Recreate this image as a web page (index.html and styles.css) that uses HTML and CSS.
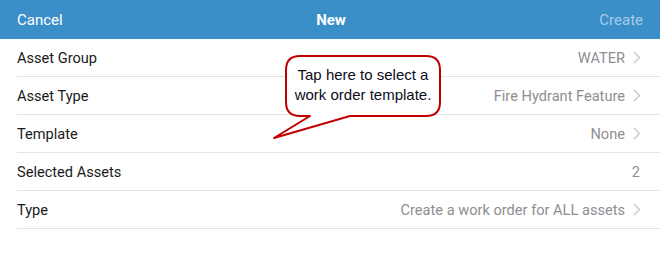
FILE: index.html
```html
<!DOCTYPE html>
<html lang="en">
<head>
    <meta charset="UTF-8">
    <title>New Work Order</title>
    <link rel="stylesheet" href="styles.css">
</head>
<body>
    <div class="nav">
        <span class="nav-left">Cancel</span>
        <span class="nav-title">New</span>
        <span class="nav-right">Create</span>
    </div>

    <ul class="list">
        <li class="row">
            <span class="label">Asset Group</span>
            <span class="value">WATER</span>
            <svg class="chevron" viewBox="0 0 8 13"><path d="M1 1 L6.5 6.5 L1 12"/></svg>
        </li>
        <li class="row">
            <span class="label">Asset Type</span>
            <span class="value">Fire Hydrant Feature</span>
            <svg class="chevron" viewBox="0 0 8 13"><path d="M1 1 L6.5 6.5 L1 12"/></svg>
        </li>
        <li class="row">
            <span class="label">Template</span>
            <span class="value">None</span>
            <svg class="chevron" viewBox="0 0 8 13"><path d="M1 1 L6.5 6.5 L1 12"/></svg>
        </li>
        <li class="row">
            <span class="label">Selected Assets</span>
            <span class="value no-chevron">2</span>
        </li>
        <li class="row">
            <span class="label">Type</span>
            <span class="value">Create a work order for ALL assets</span>
            <svg class="chevron" viewBox="0 0 8 13"><path d="M1 1 L6.5 6.5 L1 12"/></svg>
        </li>
    </ul>

    <!-- callout over the list -->
    <div class="callout">
        <svg class="callout-shape" width="180" height="90" viewBox="0 0 180 90">
            <path d="M28 1 H154 Q168 1 168 15 V47 Q168 61 154 61 H78 L2 83 L38 61 H28 Q14 61 14 47 V15 Q14 1 28 1 Z"/>
        </svg>
        <div class="callout-text">Tap here to select a<br>work order template.</div>
    </div>
</body>
</html>
```

FILE: styles.css
```css
* {
    margin: 0;
    padding: 0;
    box-sizing: border-box;
}

body {
    font-family: Roboto, 'Liberation Sans', sans-serif;
    background: white;
    width: 660px;
    height: 256px;
    position: relative;
    overflow: hidden;
}

.nav {
    height: 39px;
    background: #3a8fc8;
    display: flex;
    align-items: center;
    justify-content: space-between;
    padding: 0 17px 0 17px;
    font-size: 15px;
    color: white;
}

.nav-title {
    font-weight: 700;
}

.nav-right {
    color: #a3cbe8;
}

.list {
    list-style: none;
    padding-left: 17px;
}

.row {
    height: 38px;
    display: flex;
    align-items: center;
    border-bottom: 1px solid #e3e3e6;
    padding-right: 19px;
    font-size: 14.6px;
    color: #1a1a1a;
}

.label {
    flex: 1;
}

.value {
    color: #8e8e93;
}

.value.no-chevron {
    margin-right: 1px;
}

.chevron {
    width: 8px;
    height: 13px;
    margin-left: 8px;
    fill: none;
    stroke: #c7c7cc;
    stroke-width: 1.4;
}

.callout {
    position: absolute;
    left: 272px;
    top: 55px;
    width: 180px;
    height: 90px;
}

.callout-shape {
    position: absolute;
    left: 0;
    top: 0;
}

.callout-shape path {
    fill: white;
    stroke: #c00000;
    stroke-width: 2;
    stroke-linejoin: round;
}

.callout-text {
    position: absolute;
    left: 14px;
    top: 10px;
    width: 154px;
    text-align: center;
    font-family: 'Liberation Sans', Arial, sans-serif;
    font-size: 15px;
    line-height: 20px;
    color: #0d0d1a;
}
```
